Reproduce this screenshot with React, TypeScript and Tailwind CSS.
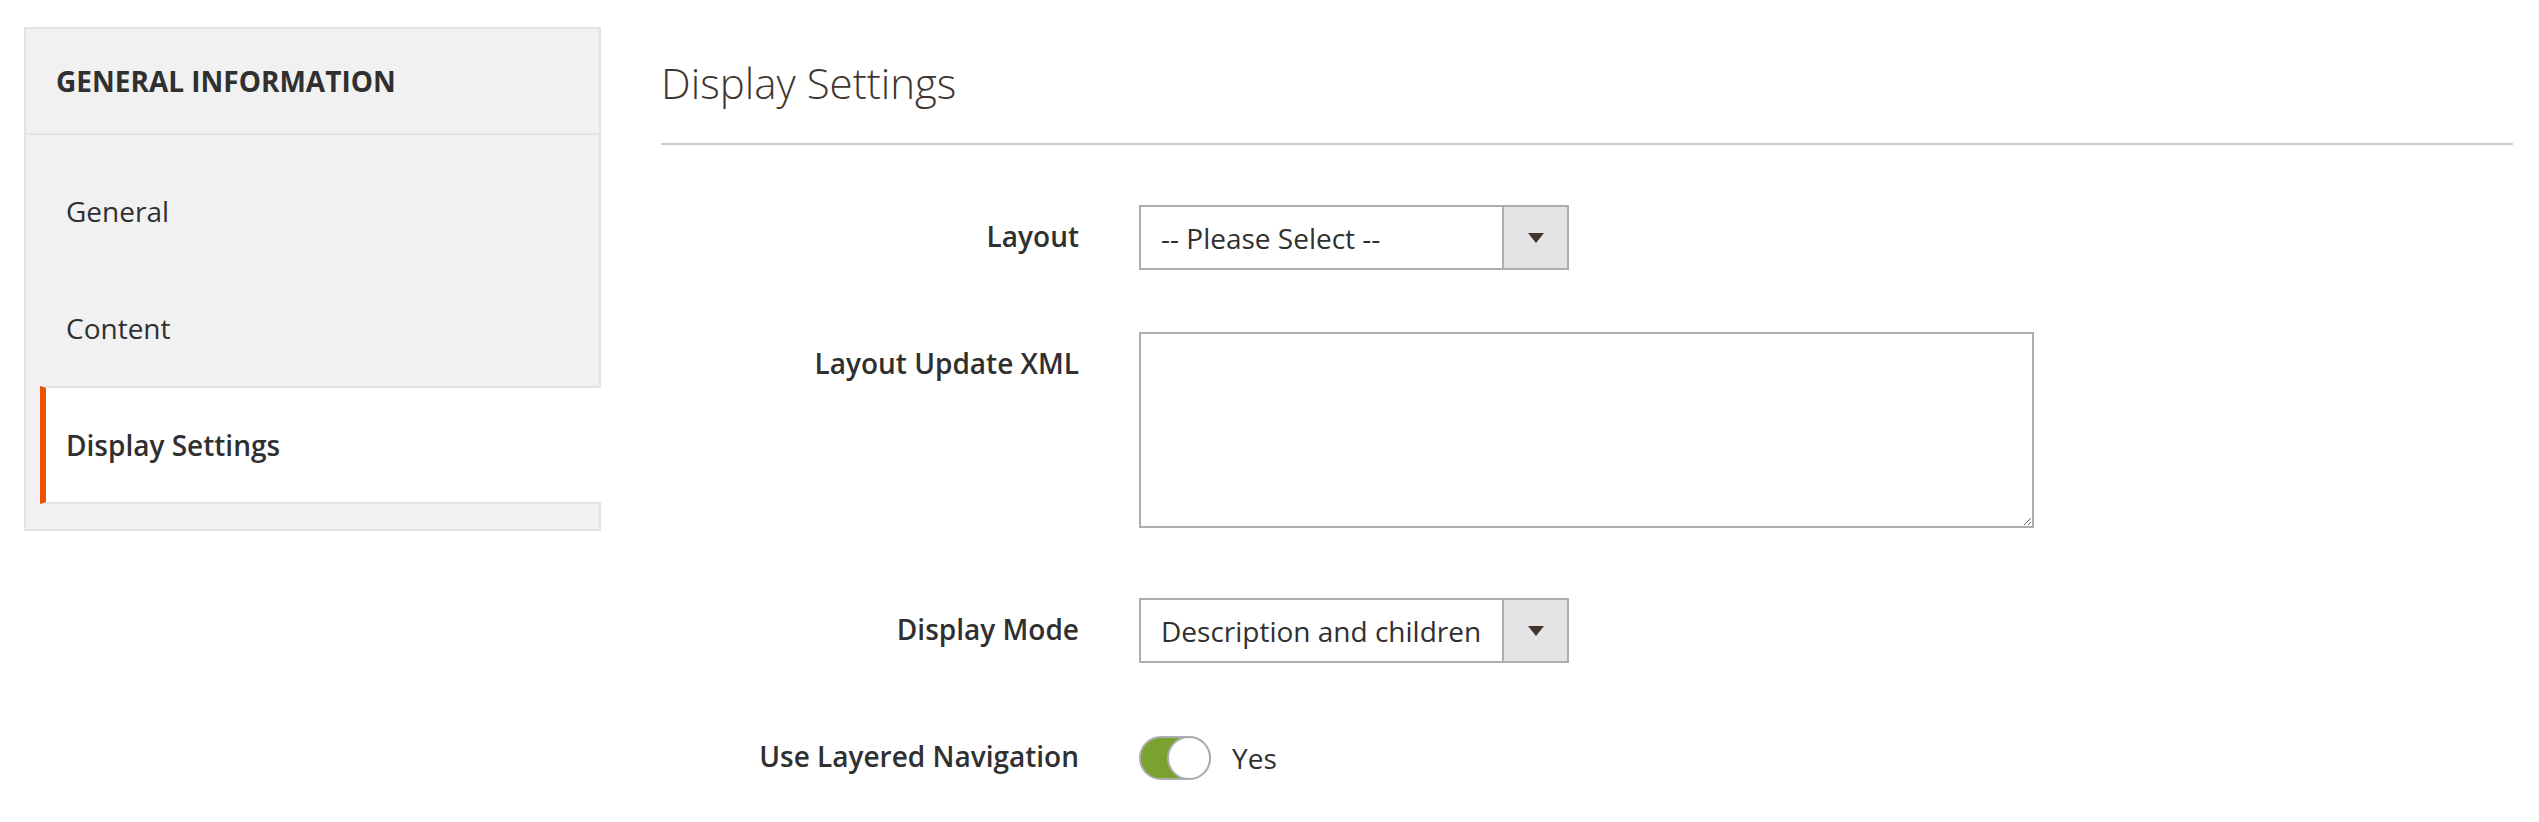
const navItems = [
  { label: 'General', active: false },
  { label: 'Content', active: false },
  { label: 'Display Settings', active: true },
];

function SelectBox({ value }: { value: string }) {
  return (
    <div className="flex h-[65px] w-[430px] items-stretch border-2 border-[#adadad] bg-white">
      <div className="flex flex-1 items-center pl-[20px] text-[28px] leading-[40px] text-[#303030]">
        {value}
      </div>
      <div className="flex w-[65px] items-center justify-center border-l-2 border-[#adadad] bg-[#e3e3e3]">
        <svg width="16" height="10" viewBox="0 0 16 10">
          <polygon points="0,0 16,0 8,10" fill="#41362f" />
        </svg>
      </div>
    </div>
  );
}

function FieldRow({
  label,
  children,
  last,
  gap = 'mb-[62px]',
}: {
  label: string;
  children: React.ReactNode;
  last?: boolean;
  gap?: string;
}) {
  return (
    <div className={`flex items-start ${last ? '' : gap}`}>
      <div className="w-[418px] pt-[11px] text-right text-[28px] font-semibold leading-[40px] text-[#303030]">
        {label}
      </div>
      <div className="ml-[60px]">{children}</div>
    </div>
  );
}

export default function App() {
  return (
    <div className="flex min-h-screen items-start bg-white pl-[24px] pr-[26px] pt-[27px] font-['Open_Sans',sans-serif] text-[#303030]">
      {/* sidebar tabs */}
      <aside className="w-[577px] shrink-0 border-2 border-[#e3e3e3] bg-[#f1f1f1]">
        <div className="flex h-[106px] items-center border-b-2 border-[#e3e3e3] pl-[30px] text-[28px] font-bold uppercase leading-[40px] text-[#303030]">
          General Information
        </div>
        <ul className="-mr-[2px] ml-[14px] pb-[25px] pt-[17px]">
          {navItems.map((item) => (
            <li
              key={item.label}
              className={
                item.active
                  ? 'flex h-[118px] items-center border-y-2 border-l-[6px] border-y-[#e3e3e3] border-l-[#eb5202] bg-white pl-[20px] text-[28px] font-semibold leading-[40px] text-[#303030]'
                  : 'flex h-[117px] items-center border-y-2 border-l-[6px] border-transparent pl-[20px] text-[28px] leading-[40px] text-[#303030]'
              }
            >
              {item.label}
            </li>
          ))}
        </ul>
      </aside>

      {/* main fieldset */}
      <main className="ml-[60px] flex-1">
        <h2 className="border-b-2 border-[#cccccc] pb-[35px] pt-[31px] text-[42px] font-light leading-[50px] text-[#41362f]">
          Display Settings
        </h2>

        <div className="pt-[60px]">
          <FieldRow label="Layout">
            <SelectBox value="-- Please Select --" />
          </FieldRow>

          <FieldRow label="Layout Update XML" gap="mb-[70px]">
            <textarea className="block h-[196px] w-[895px] border-2 border-[#adadad] bg-white px-[20px] py-[10px] text-[28px] outline-none" />
          </FieldRow>

          <FieldRow label="Display Mode">
            <SelectBox value="Description and children" />
          </FieldRow>

          <FieldRow label="Use Layered Navigation" last>
            <div className="mt-[11px] flex items-center">
              <div className="relative h-[44px] w-[72px] rounded-full border-2 border-[#adadad] bg-[#79a22e]">
                <span className="absolute -right-[2px] -top-[2px] h-[44px] w-[44px] rounded-full border-2 border-[#adadad] bg-white" />
              </div>
              <span className="ml-[21px] text-[28px] leading-[40px] text-[#303030]">Yes</span>
            </div>
          </FieldRow>
        </div>
      </main>
    </div>
  );
}
